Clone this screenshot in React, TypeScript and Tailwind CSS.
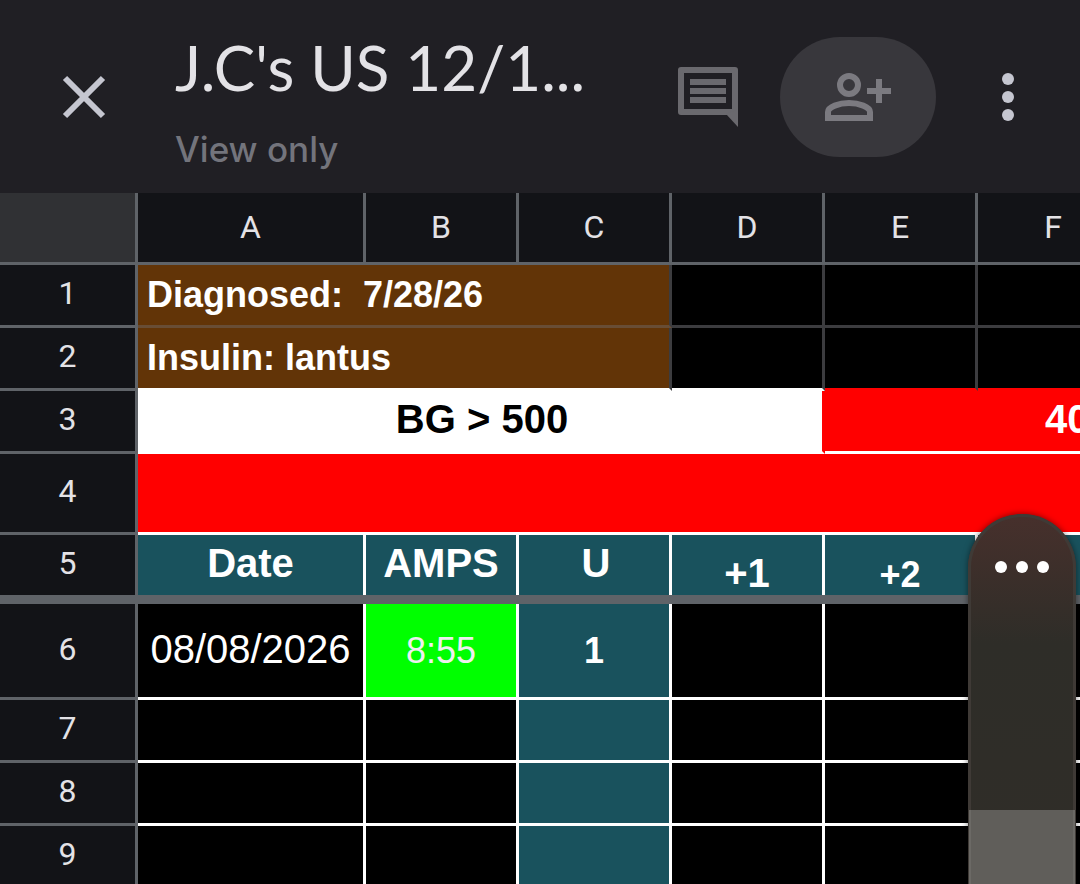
import { useState } from "react";

type Cell = {
  text?: string;
  span?: number;
  className: string;
};

type Row = {
  id: number;
  height: string;
  frozenEdge?: boolean;
  cells: Cell[];
};

const columns = ["A", "B", "C", "D", "E", "F", "G", "H"];

const plain = "bg-black border-[#3c3c3f]";
const ruled = "bg-black border-white";
const teal = "bg-[#19525d] border-white";
const brown = "bg-[#623407] border-r-[#3c3c3f] pl-[9px] text-left text-4xl font-bold";
const heading = `${teal} font-bold`;

const emptyRow = (id: number): Row => ({
  id,
  height: "h-[63px]",
  cells: columns.map((column) => ({ className: column === "C" ? teal : ruled })),
});

const rows: Row[] = [
  {
    id: 1,
    height: "h-[63px]",
    cells: [
      { text: "Diagnosed:  7/28/26", span: 3, className: `${brown} border-b-[#684d35]` },
      ...Array.from({ length: 5 }, () => ({ className: plain })),
    ],
  },
  {
    id: 2,
    height: "h-[63px]",
    cells: [
      { text: "Insulin: lantus", span: 3, className: `${brown} border-b-white` },
      { className: "bg-black border-r-[#3c3c3f] border-b-white" },
      ...Array.from({ length: 4 }, () => ({
        className: "bg-black border-r-[#3c3c3f] border-b-[#ff0000]",
      })),
    ],
  },
  {
    id: 3,
    height: "h-[63px]",
    cells: [
      {
        text: "BG > 500",
        span: 4,
        className: "bg-white border-r-[#ff0000] border-b-white pb-1 pl-1 text-[40px] font-bold text-black",
      },
      {
        text: "400 - 499",
        span: 4,
        className: "bg-[#ff0000] border-white pb-1 text-[40px] font-bold",
      },
    ],
  },
  {
    id: 4,
    height: "h-[81px]",
    cells: [{ span: 8, className: "bg-[#ff0000] border-white" }],
  },
  {
    id: 5,
    height: "h-[60px]",
    frozenEdge: true,
    cells: [
      { text: "Date", className: `${heading} pb-1 text-[40px]` },
      { text: "AMPS", className: `${heading} pb-1 text-[40px]` },
      { text: "U", className: `${heading} pb-1 pl-1 text-[40px]` },
      { text: "+1", className: `${heading} pb-0.5 align-bottom text-[40px]` },
      { text: "+2", className: `${heading} align-bottom text-4xl` },
      { text: "+3", className: `${heading} align-bottom text-4xl` },
      { text: "+4", className: `${heading} align-bottom text-4xl` },
      { text: "+5", className: `${heading} align-bottom text-4xl` },
    ],
  },
  {
    id: 6,
    height: "h-24",
    cells: [
      { text: "08/08/2026", className: `${ruled} pb-1 text-[40px]` },
      { text: "8:55", className: "bg-[#00ff00] border-white text-4xl text-[#efefef]" },
      { text: "1", className: `${teal} text-4xl font-bold` },
      ...Array.from({ length: 5 }, () => ({ className: ruled })),
    ],
  },
  emptyRow(7),
  emptyRow(8),
  emptyRow(9),
];

function TopBar() {
  return (
    <header className="flex h-[193px] shrink-0 items-center bg-[#201f24] pr-12 pl-[60px]">
      <button type="button" aria-label="Close" className="shrink-0 text-[#c5c6d0]">
        <svg viewBox="0 0 48 48" className="size-12" fill="none" stroke="currentColor" strokeWidth="6">
          <path d="M5 5l38 38M43 5l-38 38" />
        </svg>
      </button>

      <div className="ml-[67px] min-w-0 flex-1 pt-1">
        <h1 className="font-['Lato',sans-serif] text-[62px] leading-[76px] whitespace-nowrap text-[#e3e2e6]">
          J.C's US 12/1...
        </h1>
        <p className="mt-6 font-['Inter',sans-serif] text-[35px] leading-10 font-medium text-[#73747c]">
          View only
        </p>
      </div>

      <button type="button" aria-label="Comments" className="shrink-0 text-[#6a696e]">
        <svg viewBox="0 0 72 72" className="size-[72px]" fill="none" stroke="currentColor" strokeWidth="6">
          <path d="M9 9h54v42H9z" strokeLinejoin="round" />
          <path d="M18 21h36M18 30h36M18 39h36" />
          <path d="M54 53l12 13V48z" fill="currentColor" stroke="none" />
        </svg>
      </button>

      <button
        type="button"
        aria-label="Share"
        className="ml-9 flex h-[120px] w-[156px] shrink-0 items-center justify-center rounded-full bg-[#38373c] text-[#7b7a80]"
      >
        <svg viewBox="0 0 66 48" className="h-12 w-[66px]" fill="none" stroke="currentColor" strokeWidth="6">
          <circle cx="24" cy="12" r="9" />
          <path d="M3 45v-6c0-5 11-9 21-9s21 4 21 9v6z" />
          <path d="M54 6v24M42 18h24" />
        </svg>
      </button>

      <button type="button" aria-label="More options" className="ml-12 shrink-0 text-[#c5c6d0]">
        <svg viewBox="0 0 48 48" className="size-12" fill="currentColor">
          <circle cx="24" cy="6" r="6" />
          <circle cx="24" cy="24" r="6" />
          <circle cx="24" cy="42" r="6" />
        </svg>
      </button>
    </header>
  );
}

function SheetRow({ row }: { row: Row }) {
  const edge = row.frozenEdge ? "border-b-0" : "border-b-3";

  return (
    <>
      <tr className={row.height}>
        <th
          scope="row"
          className={`${edge} border-r-3 border-[#5f6368] bg-[#121317] p-0 pb-1 font-['Roboto',sans-serif] text-[32px] font-normal text-[#e3e2e6]`}
        >
          {row.id}
        </th>
        {row.cells.map((cell, index) => (
          <td
            key={index}
            colSpan={cell.span}
            className={`${edge} border-r-3 py-0 whitespace-pre ${cell.className}`}
          >
            {cell.text}
          </td>
        ))}
      </tr>
      {/* Frozen rows divider */}
      {row.frozenEdge && (
        <tr className="h-[9px]" aria-hidden="true">
          <td colSpan={9} className="bg-[#5f6368] p-0" />
        </tr>
      )}
    </>
  );
}

function Sheet() {
  return (
    <div className="min-h-0 flex-1 overflow-auto [scrollbar-width:none]">
      <table className="w-max table-fixed border-separate border-spacing-0 text-center leading-none">
        <colgroup>
          <col className="w-[138px]" />
          <col className="w-[228px]" />
          {columns.slice(1).map((column) => (
            <col key={column} className="w-[153px]" />
          ))}
        </colgroup>
        <thead>
          <tr className="h-[72px] font-['Roboto',sans-serif] text-[32px] text-[#e3e2e6]">
            <td className="border-r-3 border-b-3 border-[#5f6368] bg-[#303134]" />
            {columns.map((column) => (
              <th
                key={column}
                scope="col"
                className="border-r-3 border-b-3 border-[#5f6368] bg-[#121317] p-0 pb-0.5 font-normal"
              >
                {column}
              </th>
            ))}
          </tr>
        </thead>
        <tbody className="font-['Liberation_Sans',Arial,sans-serif] text-white">
          {rows.map((row) => (
            <SheetRow key={row.id} row={row} />
          ))}
        </tbody>
      </table>
    </div>
  );
}

// Floating volume panel that sits over the sheet
function VolumePanel() {
  const [level, setLevel] = useState(28);

  return (
    <aside className="absolute top-[514px] right-1 bottom-0 flex w-[108px] flex-col overflow-hidden rounded-t-full bg-linear-to-b from-[#47302c] via-[#2e2d28] via-35% to-[#302d28] shadow-[inset_0_0_0_3px_#3f3a36,0_0_6px_rgba(0,0,0,0.5)]">
      <button
        type="button"
        aria-label="Sound settings"
        className="flex h-[106px] shrink-0 items-center justify-center gap-[9px]"
      >
        <span className="size-3 rounded-full bg-white" />
        <span className="size-3 rounded-full bg-white" />
        <span className="size-3 rounded-full bg-white" />
      </button>
      <div className="relative flex flex-1 flex-col justify-end px-px">
        <div
          className="border-x-2 border-[#6b6965] bg-[#605e5a]"
          style={{ height: `${level}%` }}
        />
        <input
          type="range"
          aria-label="Volume"
          min={0}
          max={100}
          value={level}
          onChange={(e) => setLevel(Number(e.target.value))}
          className="absolute inset-0 size-full opacity-0 [direction:rtl] [writing-mode:vertical-lr]"
        />
      </div>
    </aside>
  );
}

export default function App() {
  return (
    <div className="relative flex h-screen flex-col overflow-hidden bg-black">
      <TopBar />
      <Sheet />
      <VolumePanel />
    </div>
  );
}
